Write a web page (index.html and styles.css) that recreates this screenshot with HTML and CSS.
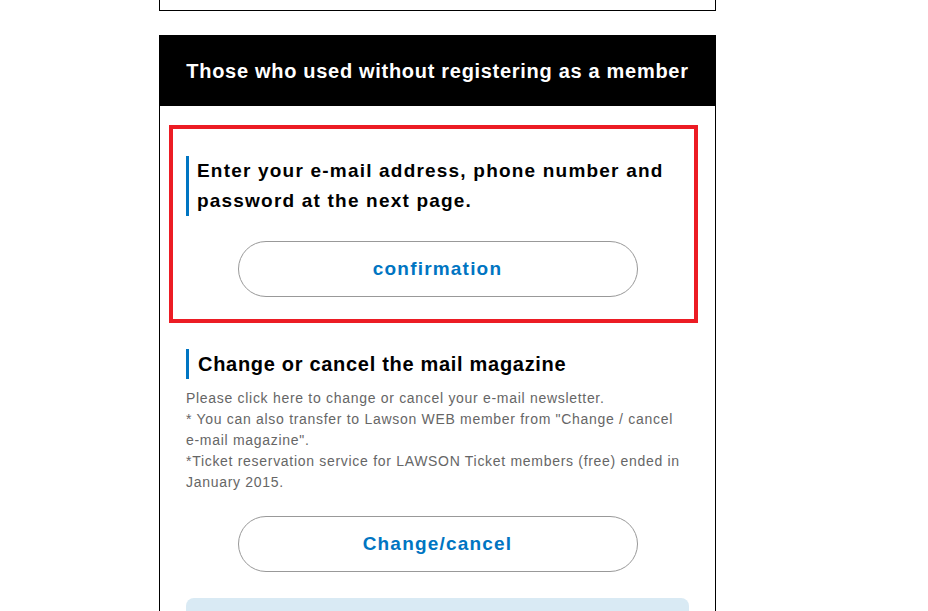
FILE: index.html
```html
<!DOCTYPE html>
<html>
<head>
  <title>Lawson Ticket - Mail magazine</title>
  <link rel="stylesheet" href="styles.css">
</head>
<body>

  <div class="page">
    <div class="panel panel-prev"></div>

    <div class="panel">
      <h2 class="panel-title">Those who used without registering as a member</h2>

      <div class="panel-body">
        <div class="section section-marked">
          <div class="marker"></div>
          <h3 class="section-head section-head-lg">Enter your e-mail address, phone number and password at the next page.</h3>
          <a class="pill-btn" href="#">confirmation</a>
        </div>

        <div class="section">
          <h3 class="section-head">Change or cancel the mail magazine</h3>
          <p class="note">
            Please click here to change or cancel your e-mail newsletter.<br>
            * You can also transfer to Lawson WEB member from "Change / cancel e-mail magazine".<br>
            *Ticket reservation service for LAWSON Ticket members (free) ended in January 2015.
          </p>
          <a class="pill-btn" href="#">Change/cancel</a>
        </div>

        <div class="info-box"></div>
      </div>
    </div>
  </div>

</body>
</html>
```

FILE: styles.css
```css
body {
  margin: 0;
  background: #fff;
  font-family: "Liberation Sans", Arial, sans-serif;
  color: #000;
  overflow: hidden;
}

.page {
  width: 557px;
  margin-left: 159px;
}

.panel {
  border: 1px solid #000;
  border-bottom: none;
  box-sizing: border-box;
}

.panel-prev {
  height: 11px;
  border-top: none;
  border-bottom: 1px solid #000;
  margin-bottom: 24px;
}

.panel-title {
  margin: 0 -1px;
  height: 70px;
  background: #000;
  color: #fff;
  font-size: 20px;
  font-weight: bold;
  letter-spacing: 0.7px;
  line-height: 70px;
  text-align: center;
}

.panel-body {
  padding: 50px 26px 0;
}

.section {
  position: relative;
}

.marker {
  position: absolute;
  left: -17px;
  right: -9px;
  top: -31px;
  bottom: -26px;
  border: 4px solid #ec1c24;
}

.section-head {
  margin: 0;
  padding-left: 9px;
  border-left: 3px solid #0075c2;
  font-size: 20px;
  font-weight: bold;
  line-height: 30px;
  letter-spacing: 0.7px;
}

.section-head-lg {
  font-size: 19px;
  letter-spacing: 1.2px;
  padding-left: 8px;
  padding-right: 10px;
}

.section + .section {
  margin-top: 52px;
}

.pill-btn {
  display: block;
  width: 400px;
  height: 56px;
  margin: 25px auto 0;
  box-sizing: border-box;
  border: 1px solid #999;
  border-radius: 28px;
  color: #0075c2;
  font-size: 19px;
  font-weight: bold;
  line-height: 54px;
  letter-spacing: 1.2px;
  text-align: center;
  text-decoration: none;
}

.note {
  margin: 9px 0 0;
  color: #666;
  font-size: 14px;
  line-height: 21px;
  letter-spacing: 0.7px;
}

.note + .pill-btn {
  margin-top: 23px;
}

.info-box {
  margin-top: 26px;
  height: 60px;
  background: #d9eaf4;
  border-radius: 8px;
}
```
